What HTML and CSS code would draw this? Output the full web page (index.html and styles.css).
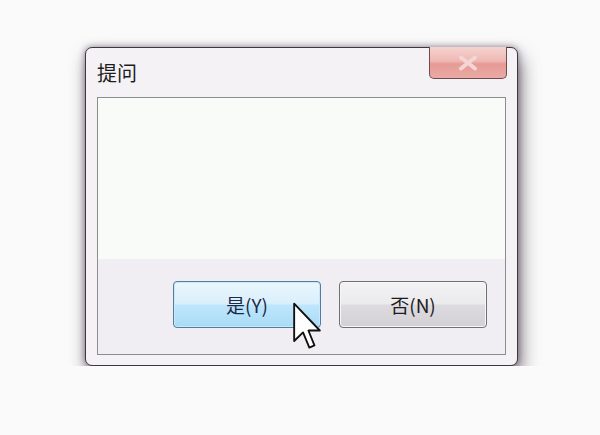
FILE: index.html
```html
<!DOCTYPE html>
<html lang="zh-CN">
<head>
    <meta charset="UTF-8">
    <meta name="viewport" content="width=device-width, initial-scale=1.0">
    <title>提问</title>
    <link rel="stylesheet" href="styles.css">
</head>
<body>
    <div class="dialog">
        <div class="titlebar">
            <span class="title">提问</span>
            <div class="close-btn">
                <svg width="24" height="16" viewBox="0 0 24 16">
                    <path d="M5 2.5 L19 13.5 M19 2.5 L5 13.5" stroke="#f3d6d3" stroke-width="4" stroke-linecap="round"/>
                </svg>
            </div>
        </div>
        <div class="panel">
            <div class="message"></div>
            <div class="actions">
                <button class="btn btn-yes">是(Y)</button>
                <button class="btn btn-no">否(N)</button>
            </div>
        </div>
        <!-- mouse pointer over the yes button -->
        <svg class="cursor" width="28" height="50" viewBox="0 0 12 21">
            <path d="M0.5 0.5 L0.5 16.5 L4.3 12.8 L7 19.3 L9.2 18.4 L6.6 12 L11.5 12 Z" fill="#fff" stroke="#111" stroke-width="0.8" stroke-linejoin="round"/>
        </svg>
    </div>
</body>
</html>
```

FILE: styles.css
```css
body {
    margin: 0;
    background-color: #fafafa;
    font-family: "Noto Sans CJK SC", "Liberation Sans", sans-serif;
}

.dialog {
    position: relative;
    box-sizing: border-box;
    width: 433px;
    height: 319px;
    margin: 47px 0 0 85px;
    padding: 0 11px 10px 11px;
    background-color: #f4f2f5;
    border: 1px solid #3e3640;
    border-radius: 7px;
    box-shadow: 0 0 7px rgba(70, 55, 75, 0.6), 3px 10px 18px rgba(50, 35, 55, 0.6);
    display: flex;
    flex-direction: column;
}

.titlebar {
    height: 49px;
    display: flex;
    justify-content: space-between;
    align-items: flex-start;
}

.title {
    margin-top: 10px;
    font-size: 20px;
    color: #1d1d1d;
}

.close-btn {
    width: 78px;
    height: 32px;
    margin-right: -1px;
    margin-top: -1px;
    box-sizing: border-box;
    border: 1px solid #6d4b51;
    border-top: none;
    border-radius: 0 0 5px 5px;
    background: linear-gradient(#f4d3d0 0%, #efb8b4 45%, #e69a95 55%, #eaaaa5 100%);
    display: flex;
    align-items: center;
    justify-content: center;
}

.panel {
    flex: 1;
    display: flex;
    flex-direction: column;
    border: 1px solid #8e8c90;
    background-color: #f8fbf8;
}

.message {
    flex: 1;
}

.actions {
    height: 95px;
    box-sizing: border-box;
    background-color: #f0eef2;
    display: flex;
    justify-content: flex-end;
    gap: 18px;
    padding: 22px 18px 0 0;
}

.btn {
    width: 148px;
    height: 47px;
    border-radius: 4px;
    font-family: "Noto Sans CJK SC", "Liberation Sans", sans-serif;
    font-size: 19px;
    padding: 0;
}

.btn-yes {
    border: 1px solid #4f7e9f;
    background: linear-gradient(#eaf6fd 0%, #d9effc 48%, #bee6fd 52%, #a9dbf6 100%);
    color: #1c2a48;
    box-shadow: inset 0 0 0 1px #cbe8f8;
}

.btn-no {
    border: 1px solid #707070;
    background: linear-gradient(#f3f2f4 0%, #ebeaec 48%, #dddbdf 52%, #d2d0d4 100%);
    color: #1d1d1d;
    box-shadow: inset 0 0 0 1px #f7f7f7;
}

.cursor {
    position: absolute;
    left: 207px;
    top: 254px;
}
```
